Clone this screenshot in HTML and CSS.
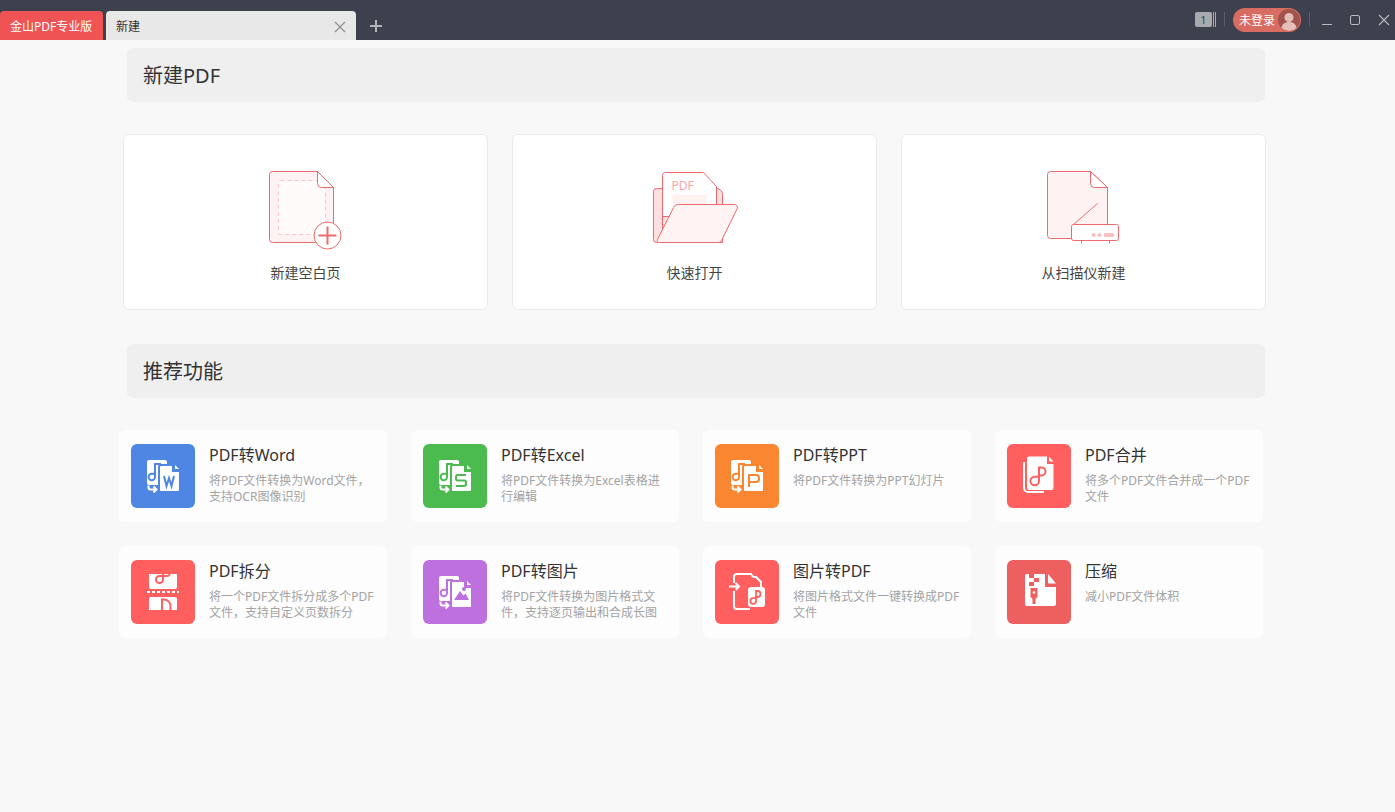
FILE: index.html
```html
<!DOCTYPE html>
<html lang="zh-CN">
<head>
<meta charset="utf-8">
<title>金山PDF专业版</title>
<link rel="stylesheet" href="styles.css">
</head>
<body>
<svg class="defs" width="0" height="0" aria-hidden="true">
  <symbol id="conv" viewBox="0 0 64 64">
    <path fill="#fff" d="M18 16h16a2 2 0 0 1 2 2v23H18a2 2 0 0 1-2-2V18a2 2 0 0 1 2-2z"/>
    <path fill="none" stroke="currentColor" stroke-width="2" d="M30 20h-6v13a3.200 3.200 0 1 1-3.200-3.200H24"/>
    <path fill="#fff" stroke="currentColor" stroke-width="2" d="M30 21h12l7 6.500V46a2 2 0 0 1-2 2H30a2 2 0 0 1-2-2V23a2 2 0 0 1 2-2z"/>
    <path fill="currentColor" d="M41 20h3v4h5v4h-8z"/>
    <path fill="#fff" d="M44 21l4 4h-3.500a.5.500 0 0 1-.5-.5z"/>
    <path fill="none" stroke="#fff" stroke-width="2" d="M17.500 41.500v2a2 2 0 0 0 2 2H25M22.500 42.500l3 3-3 3"/>
  </symbol>
</svg>

<header class="titlebar">
  <div class="tab tab-brand">金山PDF专业版</div>
  <div class="tab tab-doc">
    <span class="tab-name">新建</span>
    <svg class="tab-close" width="12" height="12" viewBox="0 0 12 12"><path d="M1 1l10 10M11 1L1 11"/></svg>
  </div>
  <svg class="tab-add" width="14" height="14" viewBox="0 0 14 14"><path d="M7 1v12M1 7h12"/></svg>
  <div class="bar-right">
    <div class="count"><span class="count-num">1</span><i></i><i></i></div>
    <span class="sep"></span>
    <div class="login">
      <span>未登录</span>
      <svg class="avatar" width="22" height="22" viewBox="0 0 22 22">
        <circle cx="11" cy="11" r="11" fill="#a2534e"/>
        <circle cx="11" cy="8.500" r="4.500" fill="#e5bdb9"/>
        <path d="M3.500 19c.5-4.500 4-6 7.500-6s7 1.500 7.500 6a11 11 0 0 1-15 0z" fill="#e5bdb9"/>
      </svg>
    </div>
    <span class="sep"></span>
    <svg class="win win-min" width="12" height="12" viewBox="0 0 12 12"><path d="M1 10.500h10"/></svg>
    <svg class="win win-max" width="12" height="12" viewBox="0 0 12 12"><rect x="1.500" y="1.500" width="9" height="9" rx="1.500"/></svg>
    <svg class="win win-close" width="12" height="12" viewBox="0 0 12 12"><path d="M1 1l10 10M11 1L1 11"/></svg>
  </div>
</header>

<main class="page">
  <h2 class="section-head">新建PDF</h2>
  <section class="new-row">
    <div class="new-card">
      <svg class="new-art" width="111" height="100" viewBox="0 0 111 100">
        <g transform="translate(.5 .5)">
          <path class="art-line" d="M22 11h45l16 16v52a3 3 0 0 1-3 3H22a3 3 0 0 1-3-3V14a3 3 0 0 1 3-3z" fill="#fff2f2"/>
          <rect x="28" y="20" width="47" height="54" rx="2" fill="#fffbfb" stroke="#fbc4c6" stroke-dasharray="4 3"/>
          <path class="art-line" d="M67 11v12a4 4 0 0 0 4 4h12z" fill="#fff"/>
          <circle class="art-line" cx="77" cy="75" r="13.500" fill="#fff"/>
          <path d="M77 66v18M68 75h18" stroke="#ec6a6e" stroke-width="2" fill="none"/>
        </g>
      </svg>
      <span class="new-label">新建空白页</span>
    </div>
    <div class="new-card">
      <svg class="new-art" width="111" height="100" viewBox="0 0 111 100">
        <g transform="translate(1.500 .5)">
          <path class="art-line" d="M16 28h60a6 6 0 0 1 6 6V82H16a3 3 0 0 1-3-3V31a3 3 0 0 1 3-3z" fill="#ffdfe0"/>
          <path class="art-line" d="M22 76V15a3 3 0 0 1 3-3H63l13 14v30H22z" fill="#fff"/>
          <text class="art-pdf" x="31" y="29">PDF</text>
          <rect x="32" y="34" width="34" height="10" fill="#fdf1f1"/>
          <path class="art-line" d="M38 44h56a3 3 0 0 1 2.700 4.200L81 80a3.500 3.500 0 0 1-3 2H19a2 2 0 0 1-2-3l16-32a5 5 0 0 1 5-3z" fill="#fff3f3"/>
        </g>
      </svg>
      <span class="new-label">快速打开</span>
    </div>
    <div class="new-card">
      <svg class="new-art" width="111" height="100" viewBox="0 0 111 100">
        <g transform="translate(2.500 .5)">
          <path class="art-line" d="M20 11h40l17 16v51H20a3 3 0 0 1-3-3V14a3 3 0 0 1 3-3z" fill="#fff2f2"/>
          <path class="art-line" d="M60 11v12a4 4 0 0 0 4 4h13z" fill="#fff"/>
          <path class="art-line" d="M43 64l24-21" fill="none"/>
          <rect class="art-line" x="41" y="64" width="47" height="16" rx="2" fill="#fff"/>
          <circle cx="63" cy="74.500" r="2" fill="#fbc0c2"/>
          <circle cx="69" cy="74.500" r="2" fill="#fbc0c2"/>
          <rect x="73" y="72.500" width="11" height="4" rx="2" fill="#fbc0c2"/>
          <path class="art-line" d="M51 80v3M79 80v3" fill="none"/>
        </g>
      </svg>
      <span class="new-label">从扫描仪新建</span>
    </div>
  </section>

  <h2 class="section-head section-head-second">推荐功能</h2>
  <section class="feature-grid">
    <article class="feature">
      <svg class="f-icon c-word" viewBox="0 0 64 64"><use href="#conv"/><path class="glyph" d="M33 32l2.500 10 2.500-8 2.500 8 2.500-10"/></svg>
      <div class="f-text"><h3>PDF转Word</h3><p>将PDF文件转换为Word文件，支持OCR图像识别</p></div>
    </article>
    <article class="feature">
      <svg class="f-icon c-excel" viewBox="0 0 64 64"><use href="#conv"/><path class="glyph" d="M43 31h-8a2 2 0 0 0-2 2v1.500a2 2 0 0 0 2 2h6a2 2 0 0 1 2 2V40a2 2 0 0 1-2 2h-8"/></svg>
      <div class="f-text"><h3>PDF转Excel</h3><p>将PDF文件转换为Excel表格进行编辑</p></div>
    </article>
    <article class="feature">
      <svg class="f-icon c-ppt" viewBox="0 0 64 64"><use href="#conv"/><path class="glyph" d="M34 43V31h7a3 3 0 0 1 3 3v1a3 3 0 0 1-3 3h-7"/></svg>
      <div class="f-text"><h3>PDF转PPT</h3><p>将PDF文件转换为PPT幻灯片</p></div>
    </article>
    <article class="feature">
      <svg class="f-icon c-red" viewBox="0 0 64 64">
        <path class="line-w" d="M17 18v26a4 4 0 0 0 4 4h16"/>
        <path fill="#fff" d="M22 12.500h18v7.500h6.500v24a2 2 0 0 1-2 2H22a2 2 0 0 1-2-2V14.500a2 2 0 0 1 2-2z"/>
        <path fill="#fff" d="M42 12.500l4.500 5h-3.500a1 1 0 0 1-1-1z"/>
        <path class="glyph" d="M32 37V23.500h2.500a4 4 0 0 1 0 8H32M32 37a4.300 4.300 0 1 1-4.300-4.300H32"/>
      </svg>
      <div class="f-text"><h3>PDF合并</h3><p>将多个PDF文件合并成一个PDF文件</p></div>
    </article>
    <article class="feature">
      <svg class="f-icon c-red" viewBox="0 0 64 64">
        <path fill="#fff" d="M18 14h28v13a2 2 0 0 1-2 2H20a2 2 0 0 1-2-2z"/>
        <path class="glyph" d="M32 14v5.500a3.500 3.500 0 1 1-3.500-3.500H35a4 4 0 0 0 4-2"/>
        <path class="dash" d="M16 32h32"/>
        <path fill="#fff" d="M20 37h24a2 2 0 0 1 2 2v11H18V39a2 2 0 0 1 2-2z"/>
        <path class="glyph" d="M31 50V39.500h2a6.500 6.500 0 0 1 6.500 6.500v4"/>
      </svg>
      <div class="f-text"><h3>PDF拆分</h3><p>将一个PDF文件拆分成多个PDF文件，支持自定义页数拆分</p></div>
    </article>
    <article class="feature">
      <svg class="f-icon c-purple" viewBox="0 0 64 64"><use href="#conv"/><path fill="currentColor" d="M31 40l6-9 3.500 4.500 2-2L46 40z"/><circle cx="41" cy="29" r="2" fill="currentColor"/></svg>
      <div class="f-text"><h3>PDF转图片</h3><p>将PDF文件转换为图片格式文件，支持逐页输出和合成长图</p></div>
    </article>
    <article class="feature">
      <svg class="f-icon c-red" viewBox="0 0 64 64">
        <path class="line-w" d="M19 23v-6a3 3 0 0 1 3-3h14c1 2 1.500 2.500 3 3h2l5 5v6M19 31v15a3 3 0 0 0 3 3h13"/>
        <path class="line-w" d="M14 26.500h10M20.500 23l3.500 3.500-3.500 3.500"/>
        <rect x="33" y="27" width="17" height="20" rx="3" fill="#fff"/>
        <path class="glyph thin" d="M41 41V31h1.500a3 3 0 0 1 0 6H41M41 41a2.800 2.800 0 1 1-2.800-2.800H41"/>
      </svg>
      <div class="f-text"><h3>图片转PDF</h3><p>将图片格式文件一键转换成PDF文件</p></div>
    </article>
    <article class="feature">
      <svg class="f-icon c-zip" viewBox="0 0 64 64">
        <path fill="#fff" d="M20 14h18v13h11v17a2 2 0 0 1-2 2H20a2 2 0 0 1-2-2V16a2 2 0 0 1 2-2z"/>
        <path fill="#fff" d="M41 14l8 9.500h-7a1 1 0 0 1-1-1z"/>
        <path fill="currentColor" d="M22 14h5v4h-5zM27 18h5v4h-5zM22 22h5v4h-5zM23.500 28h7v9l-2 2v5h-3v-5l-2-2z"/>
        <circle cx="27" cy="32.500" r="1.300" fill="#fff"/>
      </svg>
      <div class="f-text"><h3>压缩</h3><p>减小PDF文件体积</p></div>
    </article>
  </section>
</main>
</body>
</html>
```

FILE: styles.css
```css
* { box-sizing: border-box; }
html, body { margin: 0; height: 100%; }
body {
  background: #f8f8f8;
  color: #333;
  font-family: "Noto Sans", "Noto Sans CJK SC", sans-serif;
  overflow: hidden;
}
.defs { display: block; height: 0; }

.titlebar {
  display: flex;
  align-items: flex-end;
  height: 40px;
  background: #3d404d;
}
.tab {
  display: flex;
  align-items: center;
  height: 29px;
  font-size: 12px;
  border-radius: 4px 4px 0 0;
}
.tab-brand {
  width: 103px;
  padding-left: 10px;
  background: #f05353;
  color: #fff;
}
.tab-doc {
  width: 250px;
  margin-left: 3px;
  padding: 0 10px;
  background: #e8e8e8;
  color: #333;
  justify-content: space-between;
}
.tab-close { margin-top: 3px; }
.tab-close path { stroke: #8d8d8d; stroke-width: 1.200; fill: none; }
.tab-add { margin: 0 0 7px 13px; }
.tab-add path { stroke: #b2b4ba; stroke-width: 2; fill: none; }

.bar-right {
  display: flex;
  align-items: center;
  align-self: flex-start;
  height: 40px;
  margin-left: auto;
  padding: 0 5px 0 0;
}
.count { display: flex; align-items: stretch; height: 15px; margin-top: -1px; }
.count-num {
  width: 17px;
  background: #a9aaae;
  border-radius: 2px;
  color: #3d404d;
  font-size: 11px;
  line-height: 15px;
  text-align: center;
}
.count i { width: 1px; margin-left: 1px; background: #a9aaae; }
.sep { width: 1px; height: 14px; margin: -2px 8px 0; background: #5c5f6b; }
.login {
  display: flex;
  align-items: center;
  justify-content: space-between;
  width: 68px;
  height: 24px;
  margin-top: -1px;
  padding: 0 1px 0 6px;
  border-radius: 12px;
  background: #d96c62;
  color: #fff;
  font-size: 12px;
}
.win { fill: none; stroke: #b9bbc1; stroke-width: 1; margin-top: -1px; }
.win-min { margin-left: 3px; }
.win-max { margin-left: 16px; }
.win-close { margin-left: 17px; stroke-width: 1.100; }

.page { padding-top: 8px; }
.section-head {
  width: 1138px;
  height: 54px;
  margin: 0 0 0 127px;
  padding-left: 16px;
  background: #efefef;
  border-radius: 6px;
  font-size: 20px;
  font-weight: 400;
  line-height: 56px;
  color: #333;
}
.section-head-second { margin-top: 34px; }

.new-row {
  display: flex;
  gap: 24px;
  margin: 32px 0 0 123px;
}
.new-card {
  display: flex;
  flex-direction: column;
  align-items: center;
  width: 365px;
  height: 176px;
  padding-top: 25px;
  background: #fff;
  border: 1px solid #ebebeb;
  border-radius: 6px;
}
.new-art { display: block; }
.new-label {
  margin-top: 3px;
  font-size: 14px;
  line-height: 20px;
  color: #444;
}
.art-line { stroke: #ec6a6e; stroke-width: 1; }
.art-pdf {
  font-family: "Noto Sans", sans-serif;
  font-size: 12px;
  fill: #f9a6a8;
}

.feature-grid {
  display: grid;
  grid-template-columns: repeat(4, 268px);
  grid-auto-rows: 92px;
  gap: 24px;
  margin: 32px 0 0 119px;
}
.feature {
  display: flex;
  gap: 14px;
  padding: 14px 10px 0 12px;
  background: #fdfdfd;
  border-radius: 6px;
}
.f-icon {
  flex: none;
  width: 64px;
  height: 64px;
  border-radius: 6px;
  background: currentColor;
}
.f-text { min-width: 0; }
.f-text h3 {
  margin: 0;
  font-size: 16px;
  font-weight: 400;
  line-height: 22px;
  color: #333;
}
.f-text p {
  margin: 7px 0 0;
  font-size: 12px;
  line-height: 16px;
  color: #a3a3a3;
}
.c-word { color: #4f86e4; }
.c-excel { color: #4bbb4f; }
.c-ppt { color: #fb8632; }
.c-red { color: #ff5f5f; }
.c-purple { color: #bf70df; }
.c-zip { color: #ee6060; }
.glyph { fill: none; stroke: currentColor; stroke-width: 2; }
.glyph.thin { stroke-width: 1.800; }
.line-w { fill: none; stroke: #fff; stroke-width: 2; }
.dash { fill: none; stroke: #fff; stroke-width: 2; stroke-dasharray: 3 2; }
```
